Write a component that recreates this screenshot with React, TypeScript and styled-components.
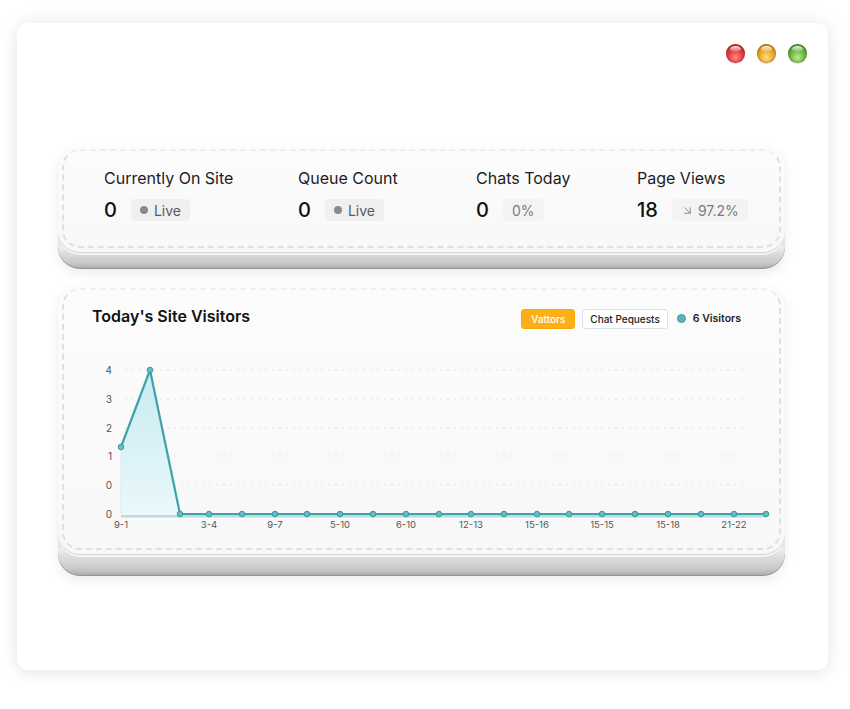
import React from 'react';
import styled, { createGlobalStyle } from 'styled-components';
import { ArrowDownRight } from 'lucide-react';

const GlobalStyle = createGlobalStyle`
  html, body {
    margin: 0;
    padding: 0;
    background: #ffffff;
    font-family: Inter, "Noto Sans", "Liberation Sans", sans-serif;
    color: #1d1d1f;
  }
  * { box-sizing: border-box; }
`;

const Page = styled.div`
  width: 850px;
  height: 709px;
  padding: 23px 22px 0 17px;
`;

const Window = styled.div`
  height: 647px;
  background: #ffffff;
  border-radius: 11px;
  box-shadow: 0 0 22px rgba(0, 0, 0, 0.08), 0 4px 14px rgba(0, 0, 0, 0.04);
  padding: 0 43px 0 41px;
`;

const TitleBar = styled.div`
  height: 122px;
  display: flex;
  justify-content: flex-end;
  align-items: flex-start;
  gap: 12px;
  padding: 21px 0 0;
  margin-right: -22px;
`;

const Light = styled.span<{ $tone: 'red' | 'yellow' | 'green' }>`
  width: 19px;
  height: 19px;
  border-radius: 50%;
  background: ${({ $tone }) =>
    $tone === 'red'
      ? 'radial-gradient(circle at 50% 70%, #ff8a8a 0%, #e23a3a 45%, #a81c1c 100%)'
      : $tone === 'yellow'
      ? 'radial-gradient(circle at 50% 70%, #ffe08a 0%, #e8a624 45%, #a96f0f 100%)'
      : 'radial-gradient(circle at 50% 70%, #b9ee8e 0%, #6bb33e 45%, #3d7a1e 100%)'};
  box-shadow: inset 0 0 0 1px rgba(0, 0, 0, 0.18), 0 1px 1px rgba(0, 0, 0, 0.15);
  position: relative;
  &::after {
    content: '';
    position: absolute;
    left: 4px;
    top: 2px;
    width: 11px;
    height: 6px;
    border-radius: 50%;
    background: linear-gradient(rgba(255, 255, 255, 0.85), rgba(255, 255, 255, 0.1));
  }
`;

const Slab = styled.section<{ $edge: number }>`
  border-radius: 22px;
  background-color: #e4e4e4;
  background-image: linear-gradient(#f0f0f0 0%, #dcdcdc 35%, #cacaca 75%, #b9b9b9 92%, #a7a7a7 100%);
  background-repeat: no-repeat;
  background-position: bottom;
  background-size: 100% ${({ $edge }) => $edge + 6}px;
  padding-bottom: ${({ $edge }) => $edge}px;
  box-shadow: 0 6px 12px rgba(0, 0, 0, 0.07), 0 1px 0 #9f9f9f;
  & + & {
    margin-top: 16px;
  }
`;

const Face = styled.div`
  background: linear-gradient(#fcfcfc, #f8f8f8);
  border-radius: 22px;
  padding: 4px;
  box-shadow: inset 0 1px 0 #ffffff, 0 1px 1px rgba(0, 0, 0, 0.14), 0 3px 0 #f4f4f4;
`;

const Dashed = styled.div<{ $pad: string }>`
  border: 2px dashed #e0e0e0;
  border-top-color: #efefef;
  border-radius: 18px;
  padding: ${({ $pad }) => $pad};
`;

const StatGrid = styled.div`
  display: grid;
  grid-template-columns: 194px 178px 161px 1fr;
  height: 78px;
  align-content: start;
`;

const Stat = styled.div`
  display: flex;
  flex-direction: column;
  gap: 11px;
`;

const StatLabel = styled.div`
  font-size: 16px;
  line-height: 20px;
  font-weight: 400;
  color: #1d1d1f;
`;

const StatRow = styled.div`
  display: flex;
  align-items: center;
  gap: 14px;
`;

const StatValue = styled.span`
  font-size: 20px;
  font-weight: 500;
  color: #111;
  line-height: 22px;
`;

const Badge = styled.span`
  display: inline-flex;
  align-items: center;
  gap: 6px;
  height: 22px;
  padding: 0 9px;
  border-radius: 4px;
  background: #f0f0f1;
  font-size: 14px;
  color: #5a5a5e;
`;

const MutedBadge = styled(Badge)`
  background: #f3f3f4;
  color: #7a7a7e;
  gap: 4px;
`;

const Dot = styled.span`
  width: 8px;
  height: 8px;
  border-radius: 50%;
  background: #8a8a8d;
`;

const ChartHead = styled.div`
  height: 24px;
  display: flex;
  align-items: center;
  justify-content: space-between;
`;

const ChartTitle = styled.h2`
  margin: 0;
  font-size: 16px;
  font-weight: 600;
  color: #111;
`;

const Legend = styled.div`
  display: flex;
  align-items: center;
  gap: 7px;
  margin-top: 5px;
`;

const LegendButton = styled.button<{ $active?: boolean }>`
  height: 20px;
  padding: 0 ${({ $active }) => ($active ? 9 : 7)}px;
  border-radius: 3px;
  font-family: inherit;
  font-size: 10px;
  font-weight: 500;
  cursor: pointer;
  border: 1px solid ${({ $active }) => ($active ? '#f7a90a' : '#d6e4e7')};
  background: ${({ $active }) => ($active ? '#fcb016' : '#ffffff')};
  color: ${({ $active }) => ($active ? '#ffffff' : '#222')};
`;

const LegendItem = styled.span`
  display: inline-flex;
  align-items: center;
  gap: 7px;
  margin-left: 2px;
  font-size: 10.5px;
  font-weight: 600;
  color: #222;
`;

const LegendDot = styled.span`
  width: 9px;
  height: 9px;
  border-radius: 50%;
  background: #5bb2b8;
  border: 1px solid #3d9aa3;
`;

const ChartSvg = styled.svg`
  display: block;
  margin-top: 22px;
  overflow: visible;
`;

const stats = [
  { label: 'Currently On Site', value: '0', badge: 'live' as const, text: 'Live' },
  { label: 'Queue Count', value: '0', badge: 'live' as const, text: 'Live' },
  { label: 'Chats Today', value: '0', badge: 'plain' as const, text: '0%' },
  { label: 'Page Views', value: '18', badge: 'trend' as const, text: '97.2%' },
];

// page x of each data point, minus the chart origin (92)
const flatXs = [180, 209, 242, 275, 307, 340, 373, 406, 439, 471, 504, 537, 569, 602, 635, 668, 701, 734, 766].map(
  (x) => x - 92
);
const baseY = 164;
const points: [number, number][] = [[29, 97], [58, 20], ...flatXs.map((x) => [x, baseY] as [number, number])];

const yTicks = [
  { label: '4', y: 20 },
  { label: '3', y: 49 },
  { label: '2', y: 78 },
  { label: '1', y: 106 },
  { label: '0', y: 135 },
  { label: '0', y: 164 },
];

const xTicks = [
  { label: '9-1', x: 29 },
  { label: '3-4', x: 117 },
  { label: '9-7', x: 183 },
  { label: '5-10', x: 248 },
  { label: '6-10', x: 314 },
  { label: '12-13', x: 379 },
  { label: '15-16', x: 445 },
  { label: '15-15', x: 510 },
  { label: '15-18', x: 576 },
  { label: '21-22', x: 642 },
];

const VisitorsChart: React.FC = () => {
  const line = points.map(([x, y]) => `${x},${y}`).join(' ');
  return (
    <ChartSvg width={690} height={190} viewBox="0 0 690 190">
      <defs>
        <linearGradient id="area" x1="0" y1="0" x2="0" y2="1">
          <stop offset="0%" stopColor="#c6ebf1" />
          <stop offset="100%" stopColor="#eaf8fb" />
        </linearGradient>
      </defs>
      {yTicks.slice(0, 5).map((t, i) => (
        <line key={i} x1={33} x2={655} y1={t.y} y2={t.y} stroke="#e1e1e1" strokeWidth={1} strokeDasharray="2 5" />
      ))}
      {yTicks.map((t, i) => (
        <text key={i} x={20} y={t.y + 3.5} fontSize={10} fill="#555" textAnchor="end" fontFamily="Inter, sans-serif">
          {t.label}
        </text>
      ))}
      <polygon points={`29,97 58,20 88,${baseY} 29,${baseY}`} fill="url(#area)" />
      <line x1={29} x2={29} y1={97} y2={baseY} stroke="#cfeef2" strokeWidth={1} />
      <rect x={29} y={baseY + 1} width={645} height={2.5} fill="#b5dde1" />
      <polyline points={line} fill="none" stroke="#3ea2ac" strokeWidth={2.2} strokeLinejoin="round" />
      {points.map(([x, y], i) => (
        <circle key={i} cx={x} cy={y} r={2.8} fill="#66bcc3" stroke="#3a99a3" strokeWidth={1} />
      ))}
      {xTicks.map((t) => (
        <text key={t.label + t.x} x={t.x} y={178} fontSize={9.5} fill="#555" textAnchor="middle" fontFamily="Inter, sans-serif">
          {t.label}
        </text>
      ))}
    </ChartSvg>
  );
};

const App: React.FC = () => {
  return (
    <Page>
      <GlobalStyle />
      <Window>
        <TitleBar>
          <Light $tone="red" />
          <Light $tone="yellow" />
          <Light $tone="green" />
        </TitleBar>

        <Slab $edge={16}>
          <Face>
            <Dashed $pad="17px 20px 0 40px">
              <StatGrid>
                {stats.map((s) => (
                  <Stat key={s.label}>
                    <StatLabel>{s.label}</StatLabel>
                    <StatRow>
                      <StatValue>{s.value}</StatValue>
                      {s.badge === 'live' && (
                        <Badge>
                          <Dot />
                          {s.text}
                        </Badge>
                      )}
                      {s.badge === 'plain' && <MutedBadge>{s.text}</MutedBadge>}
                      {s.badge === 'trend' && (
                        <MutedBadge>
                          <ArrowDownRight size={13} strokeWidth={1.6} />
                          {s.text}
                        </MutedBadge>
                      )}
                    </StatRow>
                  </Stat>
                ))}
              </StatGrid>
            </Dashed>
          </Face>
        </Slab>

        <Slab $edge={21}>
          <Face>
            <Dashed $pad="14px 38px 8px 28px">
              <ChartHead>
                <ChartTitle>Today's Site Visitors</ChartTitle>
                <Legend>
                  <LegendButton $active>Vattors</LegendButton>
                  <LegendButton>Chat Pequests</LegendButton>
                  <LegendItem>
                    <LegendDot />6 Visitors
                  </LegendItem>
                </Legend>
              </ChartHead>
              <VisitorsChart />
            </Dashed>
          </Face>
        </Slab>
      </Window>
    </Page>
  );
};

export default App;
